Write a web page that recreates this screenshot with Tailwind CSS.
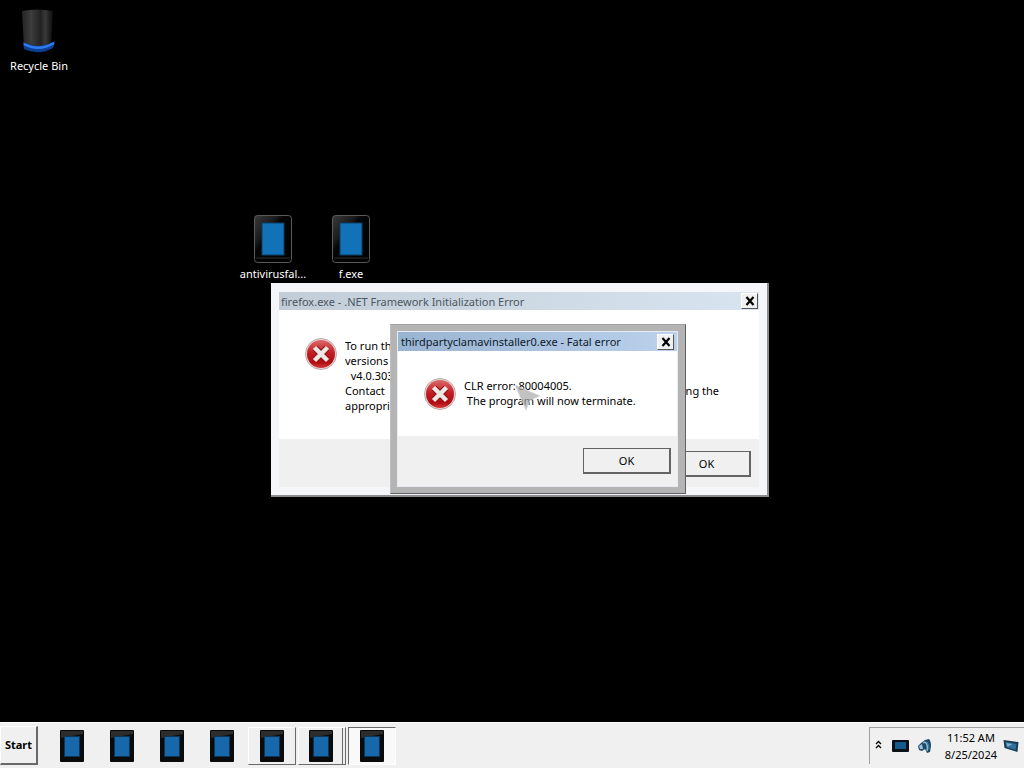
<!DOCTYPE html>
<html lang="en">
<head>
<meta charset="utf-8">
<title>Desktop</title>
<script src="https://cdn.jsdelivr.net/npm/@tailwindcss/browser@4"></script>
</head>
<body class="flex h-screen flex-col overflow-hidden bg-black font-['Noto_Sans','Open_Sans',sans-serif] text-[11px] leading-[15px] text-black">
<svg width="0" height="0" class="absolute" aria-hidden="true">
  <defs>
    <linearGradient id="case" x1="0" y1="0" x2="1" y2="1"><stop offset="0" stop-color="#3a3a3a"/><stop offset=".3" stop-color="#1c1c1c"/><stop offset=".4" stop-color="#060606"/><stop offset="1" stop-color="#000"/></linearGradient>
    <linearGradient id="bin" x1="0" x2="1" y1="0" y2="0"><stop offset="0" stop-color="#242424"/><stop offset=".3" stop-color="#3c3c3c"/><stop offset=".6" stop-color="#222"/><stop offset=".75" stop-color="#383838"/><stop offset="1" stop-color="#0c0c0c"/></linearGradient>
    <linearGradient id="red" x1="0" y1="0" x2="0" y2="1"><stop offset="0" stop-color="#dc6a6a"/><stop offset=".45" stop-color="#c41e24"/><stop offset=".8" stop-color="#b00d14"/><stop offset="1" stop-color="#d63a3a"/></linearGradient>
    <symbol id="file" viewBox="0 0 40 50"><rect x="1.5" y="1.5" width="37" height="47" rx="3" fill="url(#case)" stroke="#5a5a5a"/><path d="M3 44h34" stroke="#2c2c2c"/><rect x="9" y="9" width="22" height="32" fill="#1272b8" stroke="#0a3f68"/></symbol>
    <symbol id="app" viewBox="0 0 24 32"><rect width="24" height="32" rx="1" fill="#0a0a0a"/><path d="M1 1h22v3L1 8z" fill="#2c2c2c"/><rect x="4.500" y="6.500" width="15" height="20" fill="#1768ab" stroke="#0b3556"/></symbol>
    <symbol id="error" viewBox="0 0 32 32"><circle cx="16" cy="16" r="15.500" fill="#e9dada" stroke="#b09a9a" stroke-width=".8"/><circle cx="16" cy="16" r="14" fill="url(#red)"/><path d="M10 10l12 12M22 10L10 22" stroke="#8c1014" stroke-width="6.500"/><path d="M9.500 9.500l13 13M22.500 9.500l-13 13" stroke="#ece9e4" stroke-width="4.500"/></symbol>
    <symbol id="close" viewBox="0 0 10 10"><path d="M1.500 1l7 8M8.500 1l-7 8" stroke="#000" stroke-width="2.200"/></symbol>
  </defs>
</svg>

<main class="relative min-h-0 flex-1">
  <a href="#" class="absolute top-2 left-0 flex w-[78px] flex-col items-center text-white">
    <svg class="h-[50px] w-10" viewBox="0 0 40 50"><path d="M3 3Q18 0 34 3L32 40Q18 47 5 40z" fill="url(#bin)"/><path d="M4 34Q20 42 36 33L34 40Q20 48 5 41z" fill="#0d3e98"/><path d="M5 36Q20 44 35 35" fill="none" stroke="#2f7df0" stroke-width="2.500"/></svg>
    <span>Recycle Bin</span>
  </a>
  <a href="#" class="absolute top-[214px] left-[234px] flex w-[78px] flex-col items-center gap-[2px] text-white">
    <svg class="h-[50px] w-10"><use href="#file"/></svg><span>antivirusfal...</span>
  </a>
  <a href="#" class="absolute top-[214px] left-[312px] flex w-[78px] flex-col items-center gap-[2px] text-white">
    <svg class="h-[50px] w-10"><use href="#file"/></svg><span>f.exe</span>
  </a>

  <section role="dialog" aria-labelledby="t1" class="absolute top-[283px] left-[271px] w-[498px] border-r-2 border-b-2 border-[#8a8c90] bg-[#f5f6fa] px-2 pt-[9px] pb-2">
    <header class="flex h-[18px] items-center justify-between bg-linear-to-r from-[#c2cdd7] to-[#d8e4ef] pr-px pl-[2px] text-[#4b5661]">
      <h1 id="t1">firefox.exe - .NET Framework Initialization Error</h1>
      <button aria-label="Close" class="flex h-4 w-[17px] items-center justify-center border border-t-white border-r-[#555] border-b-[#555] border-l-white bg-[#f0f0f0]"><svg class="size-[10px]"><use href="#close"/></svg></button>
    </header>
    <div class="flex h-[129px] gap-2 bg-white pt-7 pr-[40px] pl-[26px]">
      <svg class="size-8 shrink-0"><use href="#error"/></svg>
      <div class="flex flex-1 items-start justify-between">
        <p class="w-[46px] overflow-hidden whitespace-pre">To run th
versions
  v4.0.303
Contact
appropri</p>
        <p class="pt-[45px]">ng the</p>
      </div>
    </div>
    <footer class="flex h-12 items-start justify-end bg-[#f0f0f0] pt-3 pr-2">
      <button class="h-[26px] w-[88px] border border-r-2 border-b-2 border-[#646464] bg-[#f0f0f0]">OK</button>
    </footer>
  </section>

  <section role="dialog" aria-labelledby="t2" class="absolute top-[324px] left-[390px] w-[296px] border border-t-[#a0a0a0] border-r-[#606060] border-b-[#606060] border-l-[#c0c0c0] bg-[#b4b4b4] pt-[6px] pr-[7px] pb-[6px] pl-[6px]">
    <div class="border border-[#e8ecf2] bg-white">
      <header class="flex h-[19px] items-center justify-between bg-linear-to-r from-[#99b4d1] to-[#bbd1ec] px-[3px] text-[#0c1a2c]">
        <h2 id="t2">thirdpartyclamavinstaller0.exe - Fatal error</h2>
        <button aria-label="Close" class="flex h-4 w-[17px] items-center justify-center border border-t-white border-r-[#555] border-b-[#555] border-l-white bg-[#f0f0f0]"><svg class="size-[10px]"><use href="#close"/></svg></button>
      </header>
      <div class="flex h-[85px] gap-2 pt-[27px] pl-[26px]">
        <svg class="size-8 shrink-0"><use href="#error"/></svg>
        <p class="whitespace-pre">CLR error: 80004005.
 The program will now terminate.</p>
      </div>
      <footer class="flex h-[50px] items-start justify-end bg-[#f0f0f0] pt-3 pr-[6px]">
        <button class="h-[26px] w-[88px] border border-r-2 border-b-2 border-[#646464] bg-[#f0f0f0]">OK</button>
      </footer>
    </div>
  </section>

  <svg class="absolute top-[383px] left-[514px] h-7 w-[27px]" viewBox="0 0 27 28" aria-hidden="true"><path d="M1 2L26 13 16 17 12 27z" fill="#a8a8a8" fill-opacity=".7" stroke="#d4d4d4" stroke-opacity=".7"/></svg>
</main>

<footer class="flex h-[46px] shrink-0 items-stretch justify-between border-t border-white bg-[#f0f0f0]">
  <div class="flex items-stretch">
    <button class="my-[3px] w-[38px] border-t border-r-2 border-b-2 border-l border-t-white border-r-[#696969] border-b-[#696969] border-l-white pb-[2px] font-bold">Start</button>
    <nav class="ml-[9px] flex items-stretch" aria-label="Taskbar">
      <button aria-label="Application 1" class="flex w-[50px] items-center justify-center"><svg class="h-8 w-6"><use href="#app"/></svg></button>
      <button aria-label="Application 2" class="flex w-[50px] items-center justify-center"><svg class="h-8 w-6"><use href="#app"/></svg></button>
      <button aria-label="Application 3" class="flex w-[50px] items-center justify-center"><svg class="h-8 w-6"><use href="#app"/></svg></button>
      <button aria-label="Application 4" class="flex w-[50px] items-center justify-center"><svg class="h-8 w-6"><use href="#app"/></svg></button>
      <button aria-label="Application 5" class="mt-1 mb-[3px] ml-px flex w-12 items-center justify-center border border-t-white border-r-[#696969] border-b-[#696969] border-l-white"><svg class="h-8 w-6"><use href="#app"/></svg></button>
      <button aria-label="Application 6" class="mt-1 mb-[3px] ml-[2px] flex w-12 items-center border border-t-white border-r-[#696969] border-b-[#696969] border-l-white"><span class="flex h-full w-[44px] items-center justify-center border-r border-[#696969]"><svg class="h-8 w-6"><use href="#app"/></svg></span></button>
      <button aria-label="Application 7" class="mt-1 mb-[3px] ml-[2px] flex w-12 items-center justify-center border border-t-[#696969] border-r-white border-b-white border-l-[#696969] bg-[#f9f9f9]"><svg class="h-8 w-6"><use href="#app"/></svg></button>
    </nav>
  </div>
  <div class="mt-1 mb-1 flex items-center border-t border-l border-[#a0a0a0] pr-[5px] pl-[5px]">
    <button aria-label="Show hidden icons" class="flex w-2 justify-center pb-1"><svg class="h-[9px] w-[7px]" viewBox="0 0 7 9" fill="none" stroke="#000" stroke-width="1.300"><path d="M1 4l2.500-2.500L6 4M1 8l2.500-2.500L6 8"/></svg></button>
    <svg class="ml-[9px] h-3 w-[17px]" viewBox="0 0 17 12"><rect width="17" height="12" rx="1" fill="#0c1117"/><path d="M3 2h11v7H3z" fill="#155a8c"/></svg>
    <svg class="ml-2 h-4 w-4" viewBox="0 0 16 16"><path d="M1 8L4 5 8 2 12 1Q14 3 14 8L13 14 10 15 8 11 5 13 2 12z" fill="#1d4868"/><path d="M2 8l3-2 1 5-3 0z" fill="#a2c4d8"/><path d="M6 5q3-2 4 2t0 6" fill="none" stroke="#8db8d4" stroke-width="1.500"/><path d="M10 4q2 2 2 7" fill="none" stroke="#4785ac"/></svg>
    <time class="ml-3 text-center leading-[17px]">11:52 AM<br>8/25/2024</time>
    <svg class="ml-[6px] h-[14px] w-4" viewBox="0 0 15 14"><path d="M0 1l15 2-1 10L1 9z" fill="#193c57"/><path d="M2 3l11 2-1 6-9-3z" fill="#2e6f9c"/><path d="M3 4l6 1-5 3z" fill="#7fb0cc"/></svg>
  </div>
</footer>
</body>
</html>
